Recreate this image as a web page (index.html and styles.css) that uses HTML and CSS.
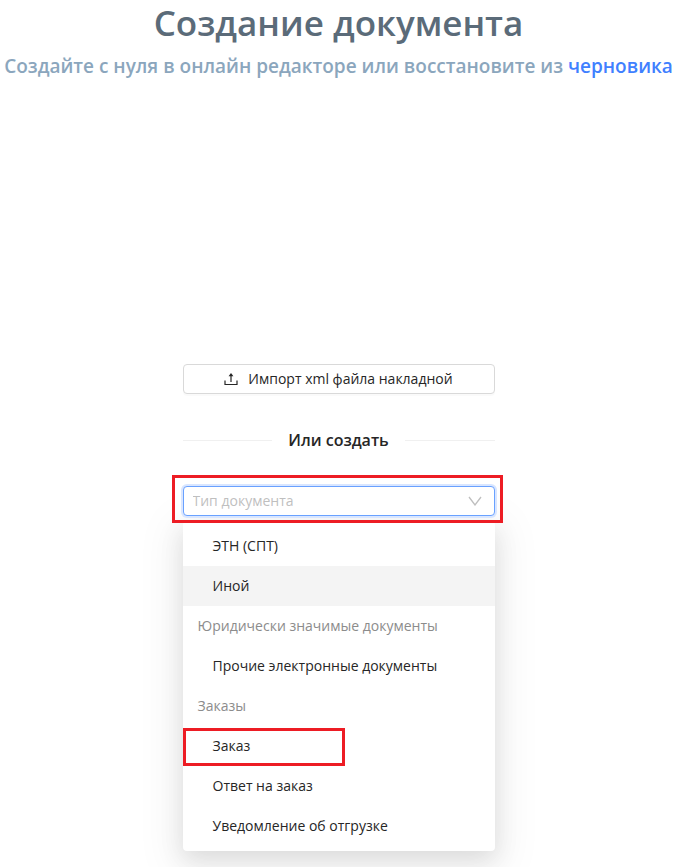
FILE: index.html
```html
<!DOCTYPE html>
<html lang="ru">
<head>
    <meta charset="UTF-8">
    <meta name="viewport" content="width=device-width, initial-scale=1.0">
    <title>Создание документа</title>
    <link rel="stylesheet" href="styles.css">
</head>
<body>
    <header class="page-header">
        <h1>Создание документа</h1>
        <p class="subtitle">Создайте с нуля в онлайн редакторе или восстановите из <a href="#drafts">черновика</a></p>
    </header>

    <main class="create-panel">
        <button type="button" class="import-button">
            <svg class="upload-icon" viewBox="0 0 14 14" width="14" height="14" aria-hidden="true">
                <path d="M1 8.500v4h12v-4M7 10V2.500" fill="none" stroke="currentColor" stroke-width="1.2"/>
                <path d="M7 1L4.600 4.200h4.800z" fill="currentColor"/>
            </svg>
            <span>Импорт xml файла накладной</span>
        </button>

        <div class="divider">Или создать</div>

        <div class="type-field">
            <select class="type-select" aria-label="Тип документа">
                <option value="">Тип документа</option>
            </select>
            <svg class="arrow-icon" viewBox="0 0 14 10" width="14" height="10" aria-hidden="true">
                <path d="M1 1l6 8 6-8" fill="none" stroke="currentColor" stroke-width="1.3"/>
            </svg>
        </div>

        <ul class="type-menu" role="listbox" aria-label="Тип документа">
            <li class="option" role="option">ЭТН (СПТ)</li>
            <li class="option active" role="option">Иной</li>
            <li class="group" role="presentation">Юридически значимые документы</li>
            <li class="option" role="option">Прочие электронные документы</li>
            <li class="group" role="presentation">Заказы</li>
            <li class="option marked" role="option">Заказ</li>
            <li class="option" role="option">Ответ на заказ</li>
            <li class="option" role="option">Уведомление об отгрузке</li>
        </ul>
    </main>
</body>
</html>
```

FILE: styles.css
```css
*,
*::before,
*::after {
    box-sizing: border-box;
}

body {
    margin: 0;
    background-color: #fff;
    color: #262626;
    font-family: "Segoe UI", "Open Sans", "Noto Sans", sans-serif;
    font-size: 14px;
    line-height: 22px;
}

.page-header {
    text-align: center;
}

h1 {
    margin: 0;
    color: #5b6b79;
    font-size: 35px;
    font-weight: 600;
    line-height: 46px;
}

.subtitle {
    margin: 6px 0 0;
    color: #8ba6bd;
    font-size: 19px;
    font-weight: 600;
    line-height: 28px;
}

.subtitle a {
    color: #4080ff;
    text-decoration: none;
}

.create-panel {
    width: 312px;
    max-width: 100%;
    margin: 284px auto 0;
    padding-bottom: 16px;
}

.import-button {
    display: flex;
    align-items: center;
    justify-content: center;
    gap: 10px;
    width: 100%;
    height: 30px;
    padding: 0;
    border: 1px solid #d9d9d9;
    border-radius: 4px;
    background-color: #fff;
    box-shadow: 0 2px 0 rgba(0, 0, 0, 0.02);
    color: inherit;
    font: inherit;
    cursor: pointer;
}

.divider {
    display: flex;
    align-items: center;
    gap: 16px;
    margin: 32px 0;
    font-size: 16px;
    font-weight: 600;
    line-height: 28px;
}

.divider::before,
.divider::after {
    content: "";
    flex: 1;
    height: 1px;
    background-color: #f0f0f0;
}

.type-field {
    position: relative;
    z-index: 1;
}

/* red highlight around the select */
.type-field::after {
    content: "";
    position: absolute;
    inset: -11px -8px -7px -11px;
    border: 3px solid #ed1c24;
    pointer-events: none;
}

.type-select {
    display: block;
    width: 100%;
    height: 30px;
    padding: 0 32px 0 9px;
    border: 1px solid #69a1ff;
    border-radius: 4px;
    outline: none;
    background-color: #fff;
    box-shadow: 0 0 0 2px #d9e6ff;
    color: #bfbfbf;
    font: inherit;
    appearance: none;
}

.arrow-icon {
    position: absolute;
    top: 10px;
    right: 13px;
    color: #bfbfbf;
    pointer-events: none;
}

.type-menu {
    margin: 5px 0 0;
    padding: 5px 0;
    border-radius: 4px;
    background-color: #fff;
    box-shadow: 0 9px 24px rgba(0, 0, 0, 0.1), 0 9px 40px 12px rgba(0, 0, 0, 0.05);
    list-style: none;
}

.option,
.group {
    padding: 9px 15px;
}

.option {
    padding-left: 30px;
    cursor: pointer;
}

.option.active {
    background-color: #f4f4f4;
}

.group {
    color: #8c8c8c;
}

.marked {
    position: relative;
}

/* red highlight around the option */
.marked::after {
    content: "";
    position: absolute;
    inset: 2px auto 0 0;
    width: 162px;
    border: 3px solid #ed1c24;
    pointer-events: none;
}
```
